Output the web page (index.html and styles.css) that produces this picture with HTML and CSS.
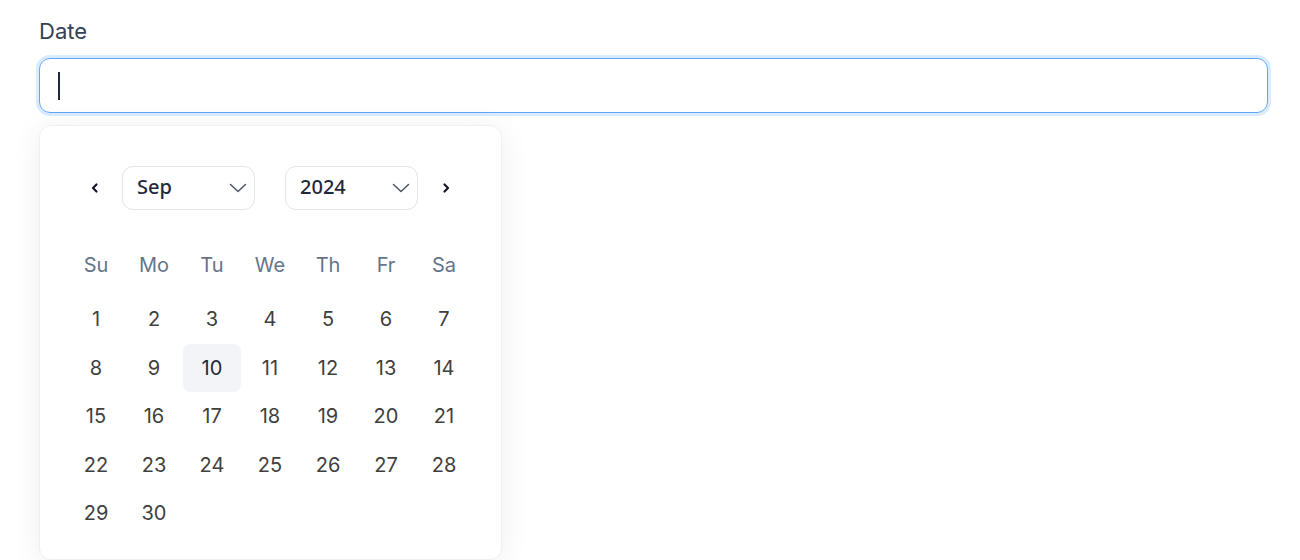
FILE: index.html
```html
<!DOCTYPE html>
<html lang="en">
<head>
<meta charset="utf-8">
<title>Date picker</title>
<link rel="stylesheet" href="styles.css">
</head>
<body>
<div class="field">
  <label class="label">Date</label>
  <div class="input"><span class="caret"></span></div>
  <div class="popup">
    <div class="nav">
      <button class="nav-btn" aria-label="Previous month">
        <svg width="10" height="12" viewBox="0 0 10 12"><path d="M6.5 2.5 L3 6 L6.5 9.5" fill="none" stroke="#111827" stroke-width="2.2" stroke-linecap="round" stroke-linejoin="round"/></svg>
      </button>
      <div class="select"><span class="select-text">Sep</span>
        <svg width="18" height="10" viewBox="0 0 18 10"><path d="M1.5 1.5 L9 8.5 L16.5 1.5" fill="none" stroke="#4b5563" stroke-width="1.5" stroke-linecap="round" stroke-linejoin="round"/></svg>
      </div>
      <div class="select"><span class="select-text">2024</span>
        <svg width="18" height="10" viewBox="0 0 18 10"><path d="M1.5 1.5 L9 8.5 L16.5 1.5" fill="none" stroke="#4b5563" stroke-width="1.5" stroke-linecap="round" stroke-linejoin="round"/></svg>
      </div>
      <button class="nav-btn" aria-label="Next month">
        <svg width="10" height="12" viewBox="0 0 10 12"><path d="M3.5 2.5 L7 6 L3.5 9.5" fill="none" stroke="#111827" stroke-width="2.2" stroke-linecap="round" stroke-linejoin="round"/></svg>
      </button>
    </div>
    <div class="weekdays">
      <span>Su</span><span>Mo</span><span>Tu</span><span>We</span><span>Th</span><span>Fr</span><span>Sa</span>
    </div>
    <div class="days">
      <span>1</span><span>2</span><span>3</span><span>4</span><span>5</span><span>6</span><span>7</span>
      <span>8</span><span>9</span><span class="today">10</span><span>11</span><span>12</span><span>13</span><span>14</span>
      <span>15</span><span>16</span><span>17</span><span>18</span><span>19</span><span>20</span><span>21</span>
      <span>22</span><span>23</span><span>24</span><span>25</span><span>26</span><span>27</span><span>28</span>
      <span>29</span><span>30</span>
    </div>
  </div>
</div>
</body>
</html>
```
FILE: styles.css
```css
html, body {
  margin: 0;
  padding: 0;
  background: #ffffff;
}
body {
  font-family: Inter, "Noto Sans", sans-serif;
  padding: 17px 32px 0 39px;
  overflow: hidden;
}
.field {
  display: flex;
  flex-direction: column;
}
.label {
  font-size: 22px;
  line-height: 28px;
  color: #334155;
  margin-bottom: 13px;
}
.input {
  box-sizing: border-box;
  height: 55px;
  border: 1px solid #60a5fa;
  border-radius: 11px;
  box-shadow: 0 0 0 3px rgba(147, 197, 253, 0.35);
  display: flex;
  align-items: center;
  padding-left: 18px;
}
.caret {
  width: 2px;
  height: 28px;
  background: #1e293b;
}
.popup {
  box-sizing: border-box;
  width: 463px;
  margin-top: 12px;
  border: 1px solid #f0f0f2;
  border-radius: 12px;
  box-shadow: 0 4px 30px rgba(0, 0, 0, 0.07);
  padding: 40px 27px 21px 27px;
  background: #fff;
}
.nav {
  display: flex;
  align-items: center;
  height: 44px;
}
.nav-btn {
  width: 55px;
  height: 44px;
  border: none;
  background: transparent;
  padding: 0;
  display: flex;
  align-items: center;
  justify-content: center;
}
.select {
  box-sizing: border-box;
  width: 133px;
  height: 44px;
  border: 1px solid #e2e4ea;
  border-radius: 11px;
  display: flex;
  align-items: center;
  justify-content: space-between;
  padding: 0 7px 0 14px;
  font-family: "Noto Sans", sans-serif;
  font-weight: 500;
  font-size: 20px;
  color: #1e293b;
}
.select-text {
  position: relative;
  top: -2px;
}
.select + .select {
  margin-left: 30px;
}
.weekdays {
  margin-top: 35px;
  display: grid;
  grid-template-columns: repeat(7, 58px);
  height: 40px;
  align-items: center;
  text-align: center;
  font-size: 20px;
  color: #64748b;
}
.days {
  margin-top: 10px;
  display: grid;
  grid-template-columns: repeat(7, 58px);
  grid-auto-rows: 48.5px;
  font-size: 20px;
  color: #404040;
}
.days span {
  display: flex;
  align-items: center;
  justify-content: center;
  border-radius: 8px;
}
.days .today {
  background: #f2f4f8;
  color: #1e293b;
}
```
